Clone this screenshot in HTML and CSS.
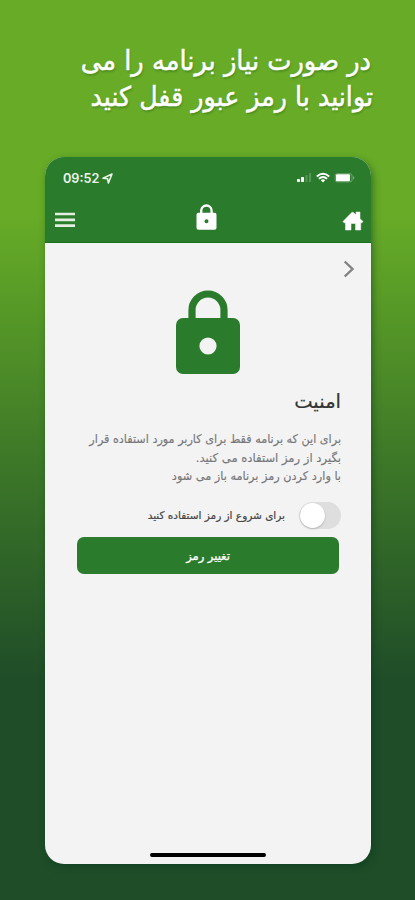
FILE: index.html
```html
<!DOCTYPE html>
<html lang="fa">
<head>
<meta charset="utf-8">
<title>امنیت</title>
<link rel="stylesheet" href="styles.css">
</head>
<body>
<main class="poster">
  <h1 class="headline" dir="rtl">
    <span class="headline-first">در صورت نیاز برنامه را می</span>
    <span class="headline-second">توانید با رمز عبور قفل کنید</span>
  </h1>
  <section class="phone">
    <header class="header">
      <div class="status">
        <div class="clock"><span>09:52</span>
          <svg width="11" height="11" viewBox="0 0 11 11"><path d="M1 5.2 10 1 6.4 10 5.5 5.7Z" fill="none" stroke="#e9f3e6" stroke-width="1.6" stroke-linejoin="round"/></svg>
        </div>
        <svg class="signals" width="60" height="12" viewBox="0 0 60 12">
          <g fill="#fff"><rect x="1" y="7" width="3" height="3" rx=".7"/><rect x="5" y="5" width="3" height="5" rx=".7"/></g>
          <g fill="#fff" opacity=".2"><rect x="9.5" y="3" width="2" height="7"/><rect x="13" y="1" width="2" height="9"/></g>
          <g fill="none" stroke="#fff" stroke-width="1.8"><path d="M20.8 4.5Q27 -.9 33.2 4.5M22.9 6.8Q27 3.3 31.1 6.8"/></g>
          <path d="M24.8 8.2Q27 6.4 29.2 8.2L27 10.5Z" fill="#fff"/>
          <rect x="39.2" y="1.7" width="16.8" height="8.2" rx="2" fill="none" stroke="#fff" stroke-opacity=".3"/>
          <rect x="40" y="2.3" width="14" height="7" rx="1" fill="#fff"/>
          <path d="M57.3 4Q59.3 5.8 57.3 7.7Z" fill="#fff" opacity=".5"/>
        </svg>
      </div>
      <nav class="toolbar">
        <svg class="menu" width="20" height="16" viewBox="0 0 20 16"><path d="M0 2H20M0 7.8H20M0 13.6H20" stroke="#e3f0e0" stroke-width="2.7"/></svg>
        <svg class="small-lock" width="21" height="27" viewBox="0 0 21 27"><path d="M5.2 10V6.7a5.2 5.2 0 0 1 10.4 0V10" fill="none" stroke="#fff" stroke-width="2.4"/><path fill="#fff" fill-rule="evenodd" d="M2.5 8.8h16a2 2 0 0 1 2 2v13a2 2 0 0 1-2 2h-16a2 2 0 0 1-2-2v-13a2 2 0 0 1 2-2ZM10.5 15.2a2 2 0 1 0 0 4 2 2 0 0 0 0-4Z"/></svg>
        <svg class="home" width="22" height="21" viewBox="0 0 22 21"><path fill="#fff" stroke="#fff" stroke-width=".5" stroke-linejoin="round" d="M1 11.5 9 3.2Q10.5 1.2 12 3.1L14 5V2H18V8.7L21 11.5 20 12.8H18.7V20H13.5V13.5H9V20H3.5V12.8H2Z"/></svg>
      </nav>
    </header>
    <div class="content">
      <svg class="chevron" width="12" height="18" viewBox="0 0 12 18"><path d="M1.7 1.5 9.5 9 1.7 16.5" fill="none" stroke="#828284" stroke-width="2.4"/></svg>
      <svg class="lock" width="64" height="84" viewBox="0 0 64 84"><path d="M16 31V20a16 16 0 0 1 32 0V31" fill="none" stroke="#2a7b2c" stroke-width="7.2"/><rect y="28" width="64" height="56" rx="7" fill="#2a7b2c"/><circle cx="32" cy="56" r="8.6" fill="#f3f3f3"/></svg>
      <h2 class="title" dir="rtl"><span>امنیت</span></h2>
      <p class="description" dir="rtl">
        <span class="line-usage">برای این که برنامه فقط برای کاربر مورد استفاده قرار</span>
        <span class="line-code">بگیرد از رمز استفاده می کنید.</span>
        <span class="line-open">با وارد کردن رمز برنامه باز می شود</span>
      </p>
      <div class="setting" dir="rtl">
        <span class="toggle"><span class="knob"></span></span>
        <span class="label">برای شروع از رمز استفاده کنید</span>
      </div>
      <button class="button" dir="rtl">تغییر رمز</button>
    </div>
    <div class="indicator"></div>
  </section>
</main>
</body>
</html>
```
FILE: styles.css
```css
* { box-sizing: border-box; }
body { margin: 0; font-family: "DejaVu Sans", sans-serif; }
svg { display: block; flex: none; }
.poster { height: 900px; padding: 43px 44px 0 45px; overflow: hidden; background: linear-gradient(#67ab27 0, #67ab27 215px, #5c9f27 280px, #3d7828 460px, #1f4d28 680px, #1f4d28 100%); }
.headline { height: 114px; margin: 0; color: #fff; font-size: 27px; font-weight: 400; line-height: 36px; text-shadow: 1px 2px 2px #2d651866; -webkit-text-stroke: .5px #fff; }
.headline span { display: block; white-space: nowrap; transform-origin: right; }
.headline-first { transform: scaleX(.952); }
.headline-second { margin-right: -2px; transform: scaleX(.937); }
.phone { display: flex; flex-direction: column; width: 326px; height: 707px; border-radius: 19px; overflow: hidden; background: #f3f3f3; box-shadow: 2px 3px 7px #06391f80; }
.header { height: 86px; background: #2b7b2d; border-bottom: 1px solid #16731c; }
.status { display: flex; justify-content: space-between; height: 42px; padding: 15px 15px 0 18px; }
.clock { display: flex; gap: 3px; height: 13px; align-items: center; color: #edf5eb; font: 600 12.7px/13px Inter, sans-serif; }
.toolbar { display: grid; grid-template-columns: 20px 1fr 22px; align-items: center; height: 42px; padding: 0 7px 0 10px; }
.small-lock { justify-self: center; margin: -5px 4px 0 0; }
.home { margin-top: 1px; }
.content { display: flex; flex-direction: column; height: 610px; padding: 17px 30px 0 32px; }
.chevron { align-self: flex-end; margin-right: -14px; }
.lock { align-self: center; margin: 12px 2px 0 0; }
.title { margin: 14px 0 0; font-size: 19.5px; line-height: 28px; font-weight: 400; color: #333; -webkit-text-stroke: .2px #333; }
.description { margin: 14px 0 0; color: #77777a; font-size: 12px; line-height: 18.7px; -webkit-text-stroke: .15px #77777a; }
.description span { display: block; white-space: nowrap; transform-origin: right; }
.line-usage { transform: scaleX(.934); }
.line-code { transform: scaleX(.965); }
.line-open { transform: scaleX(.94); }
.setting { display: flex; align-items: center; gap: 14px; height: 28px; margin-top: 15px; }
.toggle { display: flex; justify-content: flex-end; width: 42px; height: 27px; padding: 1px; border-radius: 14px; background: #dedede; }
.knob { width: 25px; height: 25px; border-radius: 50%; background: #fff; box-shadow: 0 1px 2px #0003; }
.label { font-size: 10.5px; color: #454545; white-space: nowrap; -webkit-text-stroke: .2px #454545; }
.button { height: 37px; width: 262px; margin-top: 8px; padding: 0; border: 0; border-radius: 7px; background: #2b7b2d; color: #fff; font: 11.5px "DejaVu Sans", sans-serif; -webkit-text-stroke: .3px #fff; }
.indicator { width: 116px; height: 4px; margin: 0 auto; border-radius: 2px; background: #000; }
```
